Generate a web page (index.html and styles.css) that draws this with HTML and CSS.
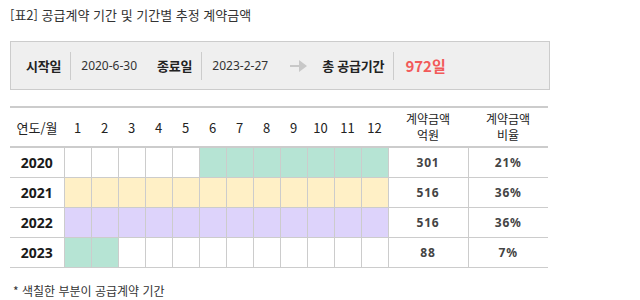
FILE: index.html
```html
<!DOCTYPE html>
<html lang="ko">
<head>
<meta charset="utf-8">
<link rel="stylesheet" href="styles.css">
</head>
<body>
<div class="title">[표2] 공급계약 기간 및 기간별 추정 계약금액</div>
<div class="info">
  <span class="label l1">시작일</span>
  <span class="sep"></span>
  <span class="date">2020-6-30</span>
  <span class="label l2">종료일</span>
  <span class="sep"></span>
  <span class="date">2023-2-27</span>
  <svg class="arrow" width="17" height="12" viewBox="0 0 17 12"><path d="M0 5h11v2H0z M9 0l8 6-8 6z" fill="#c8c8c8"/></svg>
  <span class="label l3">총 공급기간</span>
  <span class="sep"></span>
  <span class="total">972일</span>
</div>
<table class="grid">
  <colgroup>
    <col class="c-year"><col class="c-m"><col class="c-m"><col class="c-m"><col class="c-m"><col class="c-m"><col class="c-m"><col class="c-m"><col class="c-m"><col class="c-m"><col class="c-m"><col class="c-m"><col class="c-m"><col class="c-amt"><col class="c-amt">
  </colgroup>
  <thead>
    <tr>
      <th>연도/월</th><th>1</th><th>2</th><th>3</th><th>4</th><th>5</th><th>6</th><th>7</th><th>8</th><th>9</th><th>10</th><th>11</th><th>12</th>
      <th class="small"><span class="ln">계약금액</span><span class="ln">억원</span></th><th class="small"><span class="ln">계약금액</span><span class="ln">비율</span></th>
    </tr>
  </thead>
  <tbody>
    <tr>
      <td class="yr">2020</td><td></td><td></td><td></td><td></td><td></td><td class="g"></td><td class="g"></td><td class="g"></td><td class="g"></td><td class="g"></td><td class="g"></td><td class="g"></td>
      <td class="num">301</td><td class="num">21%</td>
    </tr>
    <tr>
      <td class="yr">2021</td><td class="y"></td><td class="y"></td><td class="y"></td><td class="y"></td><td class="y"></td><td class="y"></td><td class="y"></td><td class="y"></td><td class="y"></td><td class="y"></td><td class="y"></td><td class="y"></td>
      <td class="num">516</td><td class="num">36%</td>
    </tr>
    <tr>
      <td class="yr">2022</td><td class="p"></td><td class="p"></td><td class="p"></td><td class="p"></td><td class="p"></td><td class="p"></td><td class="p"></td><td class="p"></td><td class="p"></td><td class="p"></td><td class="p"></td><td class="p"></td>
      <td class="num">516</td><td class="num">36%</td>
    </tr>
    <tr>
      <td class="yr">2023</td><td class="g"></td><td class="g"></td><td></td><td></td><td></td><td></td><td></td><td></td><td></td><td></td><td></td><td></td>
      <td class="num">88</td><td class="num">7%</td>
    </tr>
  </tbody>
</table>
<div class="note">* 색칠한 부분이 공급계약 기간</div>
</body>
</html>
```
FILE: styles.css
```css
* { box-sizing: border-box; }
html, body { background: #fff; }
body {
  margin: 0;
  padding: 6px 10px 0 10px;
  font-family: "Noto Sans CJK KR", "Noto Sans", sans-serif;
  color: #333;
  width: 640px;
}
.title {
  font-size: 13px;
  line-height: 18px;
  color: #333;
  letter-spacing: 0;
}
.info {
  margin-top: 17px;
  width: 540px;
  height: 49px;
  background: #efefef;
  border: 1px solid #cccccc;
  display: flex;
  align-items: center;
  padding-left: 15px;
}
.label {
  font-size: 13px;
  font-weight: bold;
  color: #222;
  letter-spacing: -0.2px;
}
.sep {
  width: 1px;
  height: 28px;
  background: #cccccc;
  margin: 0 10px 0 9px;
}
.date {
  font-size: 12px;
  color: #333;
  font-family: "Noto Sans", sans-serif;
}
.l2 { margin-left: 20px; }
.arrow { margin-left: 22px; margin-right: 15px; }
.total {
  font-size: 15px;
  font-weight: bold;
  color: #f25a5a;
  margin-left: 1px;
}
.grid {
  margin-top: 16px;
  width: 538px;
  border-collapse: collapse;
  table-layout: fixed;
  border-top: 2px solid #cccccc;
}
.c-year { width: 54px; }
.c-m { width: 27px; }
.c-amt { width: 80px; }
.grid th {
  height: 40px;
  font-weight: normal;
  font-size: 13px;
  color: #222;
  border-bottom: 2px solid #cccccc;
  padding: 0;
  text-align: center;
  font-family: "Noto Sans CJK KR", sans-serif;
}
.grid th.small {
  font-size: 12px;
  line-height: 16px;
}
.ln { display: block; line-height: 16px; height: 16px; }
.grid td {
  height: 30px;
  padding: 0;
  border-bottom: 1px solid #cccccc;
  border-left: 1px solid #cccccc;
  text-align: center;
}
.grid td:first-child { border-left: none; }
.grid td.yr {
  font-weight: bold;
  font-size: 14px;
  color: #1a1a1a;
  font-family: "Noto Sans", sans-serif;
}
.grid td.num {
  font-weight: bold;
  font-size: 12px;
  color: #444;
  letter-spacing: 0.8px;
  font-family: "Noto Sans", sans-serif;
}
.g { background: #b6e4d4; }
.y { background: #fff0c6; }
.p { background: #ddd3fb; }
.note {
  margin-top: 14px;
  padding-left: 3px;
  font-size: 12px;
  color: #333;
}
```
